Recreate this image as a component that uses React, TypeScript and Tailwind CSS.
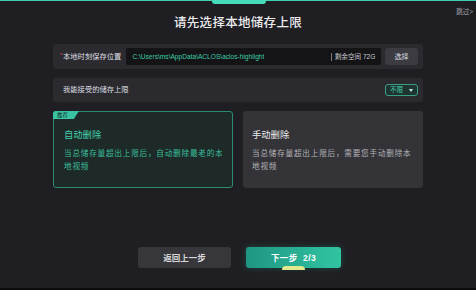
import { useState } from "react";

const FONT = "font-['Liberation_Sans','Noto_Sans_CJK_SC',sans-serif]";

export default function App() {
  const [mode, setMode] = useState<"auto" | "manual">("auto");

  return (
    <div className={`relative w-[476px] h-[290px] overflow-hidden bg-[#1f1f23] ${FONT}`}>
      {/* top accent */}
      <div className="absolute top-0 inset-x-0 h-px bg-[#3ecfb0]" />
      <div className="absolute top-0 left-[212px] w-[54px] h-[4px] rounded-b-[3px] bg-[#46dcbb]" />
      <div className="absolute top-[8px] right-[3px] text-[6.5px] leading-[8px] text-[#a4a4aa]">跳过&gt;</div>

      <h1 className="pt-[15px] text-center text-[12.5px] leading-[16px] font-medium text-[#ececee] tracking-[0.3px]">
        请先选择本地储存上限
      </h1>

      <div className="mx-[53px] mt-[13px] flex flex-col gap-[9px]">
        <div className="h-[25px] rounded-[3px] bg-[#2a2a2f] flex items-center pl-[8px] pr-[5px]">
          <span className="relative text-[7.3px] leading-[10px] text-[#dedee2] pl-[2px]">
            <span className="absolute -left-[1px] -top-[2px] text-[6px] text-[#e0465a]">*</span>
            本地时刻保存位置
          </span>
          <div className="ml-[5px] h-[17px] w-[255px] rounded-[2px] bg-[#141417] flex items-center px-[6px]">
            <span className="text-[6.6px] leading-[9px] text-[#3ccaa7] truncate">
              C:\Users\ms\AppData\ACLOS\aclos-highlight
            </span>
            <span className="ml-auto flex items-center text-[6.6px] leading-[9px] text-[#c9c9ce]">
              <span className="w-px h-[8px] bg-[#77777d] mr-[3px]" />
              剩余空间 72G
            </span>
          </div>
          <button className="ml-auto h-[17px] w-[33px] rounded-[3px] bg-[#3b3b41] text-[7px] leading-[9px] text-[#dcdce0]">
            选择
          </button>
        </div>

        <div className="h-[24px] rounded-[3px] bg-[#2a2a2f] flex items-center pl-[10px] pr-[5px]">
          <span className="text-[7.3px] leading-[10px] text-[#dedee2]">我能接受的储存上限</span>
          <button className="ml-auto h-[12px] w-[33px] rounded-[3px] border border-[#3a9e86] bg-[#1d3430] flex items-center px-[4px] text-[6.5px] leading-[8px] text-[#49cfae]">
            不限
            <span className="ml-auto w-0 h-0 border-l-[2.5px] border-r-[2.5px] border-t-[3px] border-l-transparent border-r-transparent border-t-[#bfe9dc]" />
          </button>
        </div>

        <div className="grid grid-cols-2 gap-[10px] h-[77px]">
          <div
            onClick={() => setMode("auto")}
            className={`relative cursor-pointer rounded-[3px] pl-[10px] pr-[8px] pt-[17px] ${
              mode === "auto" ? "border border-[#2f8a74] bg-[#1d2a28]" : "bg-[#333338] pt-[18px]"
            }`}
          >
            <span className="absolute -top-px -left-px h-[8px] w-[26px] bg-[#39c5a3] [clip-path:polygon(0_0,100%_0,80%_100%,0_100%)] rounded-tl-[3px] pl-[4px] text-[5.5px] leading-[8px] text-[#0f2a24]">
              推荐
            </span>
            <div className={`text-[9.3px] leading-[12px] ${mode === "auto" ? "text-[#44cfad]" : "text-[#ececee]"}`}>自动删除</div>
            <p className={`mt-[6px] text-[7.6px] leading-[13px] tracking-[0.8px] ${mode === "auto" ? "text-[#3bbf9f]" : "text-[#a9a9ae]"}`}>
              当总储存量超出上限后，自动删除最老的本地视频
            </p>
          </div>
          <div
            onClick={() => setMode("manual")}
            className={`relative cursor-pointer rounded-[3px] pl-[9px] pr-[8px] ${
              mode === "manual" ? "border border-[#2f8a74] bg-[#1d2a28] pt-[17px]" : "bg-[#333338] pt-[18px]"
            }`}
          >
            <div className={`text-[9.3px] leading-[12px] ${mode === "manual" ? "text-[#44cfad]" : "text-[#ececee]"}`}>手动删除</div>
            <p className={`mt-[6px] text-[7.6px] leading-[13px] tracking-[0.8px] ${mode === "manual" ? "text-[#3bbf9f]" : "text-[#b4b4b9]"}`}>
              当总储存量超出上限后，需要您手动删除本地视频
            </p>
          </div>
        </div>
      </div>

      <div className="mt-[59px] flex justify-center gap-[15px] pl-[3px]">
        <button className="h-[21px] w-[93px] rounded-[3px] bg-[#36363b] text-[8.5px] leading-[10px] font-bold text-[#d8d8dc]">
          返回上一步
        </button>
        <button className="relative h-[21px] w-[95px] rounded-[3px] bg-gradient-to-r from-[#1f9682] to-[#31c4a2] shadow-[0_0_6px_rgba(49,196,162,0.25)] text-[8.5px] leading-[10px] font-bold text-white tracking-[0.4px]">
          下一步&nbsp;&nbsp;2/3
          <span className="absolute left-[36px] -bottom-[2px] w-[23px] h-[4px] rounded-t-full bg-[#e4e88c]" />
        </button>
      </div>

      <div className="absolute bottom-0 inset-x-0 h-[2px] bg-[#0b0b0c]" />
    </div>
  );
}
